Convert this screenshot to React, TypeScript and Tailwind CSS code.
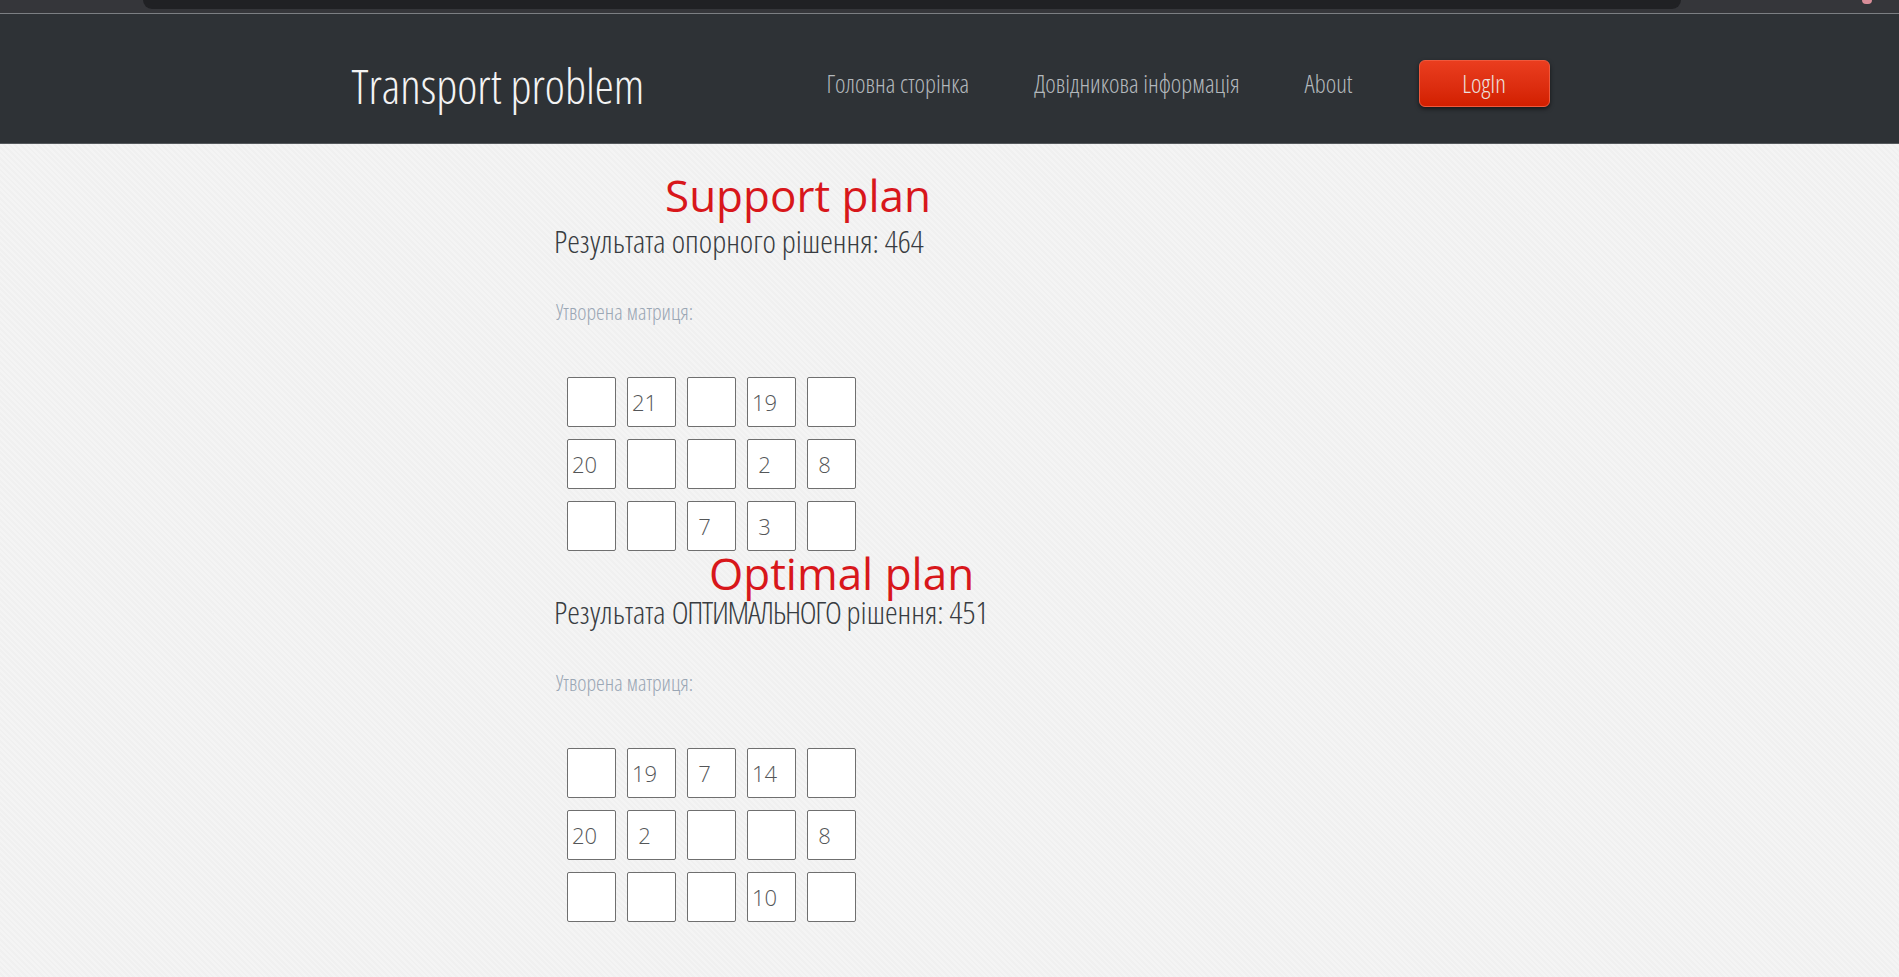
const supportMatrix = [
  ["", "21", "", "19", ""],
  ["20", "", "", "2", "8"],
  ["", "", "7", "3", ""],
];

const optimalMatrix = [
  ["", "19", "7", "14", ""],
  ["20", "2", "", "", "8"],
  ["", "", "", "10", ""],
];

const Matrix = ({ rows }: { rows: string[][] }) => {
  return (
    <div className="ml-[13px] grid grid-cols-[repeat(5,49px)] gap-x-[11px] gap-y-[12px]">
      {rows.flat().map((value, i) => (
        <div
          key={i}
          className="w-[49px] h-[50px] bg-white border border-[#6f6f6f] rounded-[2px] flex items-center"
        >
          <span className="w-[33px] text-center text-[22px] leading-none text-[#545658] font-light font-stretch-[92%]">
            {value}
          </span>
        </div>
      ))}
    </div>
  );
};

interface PlanProps {
  title: string;
  titleOffset: string;
  resultGap: string;
  label: React.ReactNode;
  rows: string[][];
}

const PlanSection = ({ title, titleOffset, resultGap, label, rows }: PlanProps) => {
  return (
    <div>
      <h2
        className={`${titleOffset} text-[44px] leading-none text-[#d8171b] font-stretch-[95%]`}
      >
        {title}
      </h2>
      <div
        className={`${resultGap} text-[32px] leading-none text-[#383c41] font-light font-stretch-condensed`}
      >
        {label}
      </div>
      <div className="mt-[43px] ml-[2px] text-[22px] leading-none text-[#9ba7b5] font-light font-stretch-condensed">
        Утворена матриця:
      </div>
      <div className="mt-[55px]">
        <Matrix rows={rows} />
      </div>
    </div>
  );
};

const App = () => {
  return (
    <div className="min-h-screen flex flex-col font-['Open_Sans',sans-serif] bg-[repeating-linear-gradient(45deg,#f4f4f4_0px,#f4f4f4_2px,#f0f0f0_2px,#f0f0f0_4px)]">
      {/* browser strip */}
      <div className="h-[13px] bg-[#35363a] flex items-start">
        <div className="ml-[143px] w-[1538px] h-[9px] bg-[#202124] rounded-b-[9px]" />
        <div className="ml-[181px] w-[10px] h-[4px] rounded-b-full bg-[#d88d98]" />
      </div>
      <div className="h-px bg-[#7c7f83]" />

      <header className="h-[130px] bg-[#2e3236] border-b border-[#55595d]">
        <div className="max-w-[1200px] mx-auto flex items-start">
          <div className="mt-[48px] ml-[2px] text-[48px] leading-none font-light font-stretch-condensed text-[#f3f3f3]">
            Transport problem
          </div>
          <nav className="ml-auto mt-[46px] flex items-center gap-[65px]">
            <a className="text-[25px] leading-none font-light font-stretch-condensed text-[#b3b8bc]">
              Головна сторінка
            </a>
            <a className="text-[25px] leading-none font-light font-stretch-condensed text-[#b3b8bc]">
              Довідникова інформація
            </a>
            <a className="text-[25px] leading-none font-light font-stretch-condensed text-[#b3b8bc]">
              About
            </a>
            <button className="ml-[1px] w-[131px] h-[47px] rounded-[6px] border border-[#f0583c] bg-gradient-to-b from-[#ea3d1e] to-[#d21f00] shadow-[0_2px_4px_rgba(0,0,0,0.55)] text-[25px] leading-none font-light font-stretch-condensed text-[#ece0de]">
              LogIn
            </button>
          </nav>
        </div>
      </header>

      <main className="pl-[554px] pt-[29px] pb-10">
        <PlanSection
          title="Support plan"
          titleOffset="ml-[111px]"
          resultGap="mt-[8px]"
          label="Результата опорного рішення: 464"
          rows={supportMatrix}
        />
        <PlanSection
          title="Optimal plan"
          titleOffset="ml-[155px]"
          resultGap="mt-[1px]"
          label={
            <>
              Результата <span className="tracking-[-1.3px]">ОПТИМАЛЬНОГО</span> рішення: 451
            </>
          }
          rows={optimalMatrix}
        />
      </main>
    </div>
  );
};

export default App;
